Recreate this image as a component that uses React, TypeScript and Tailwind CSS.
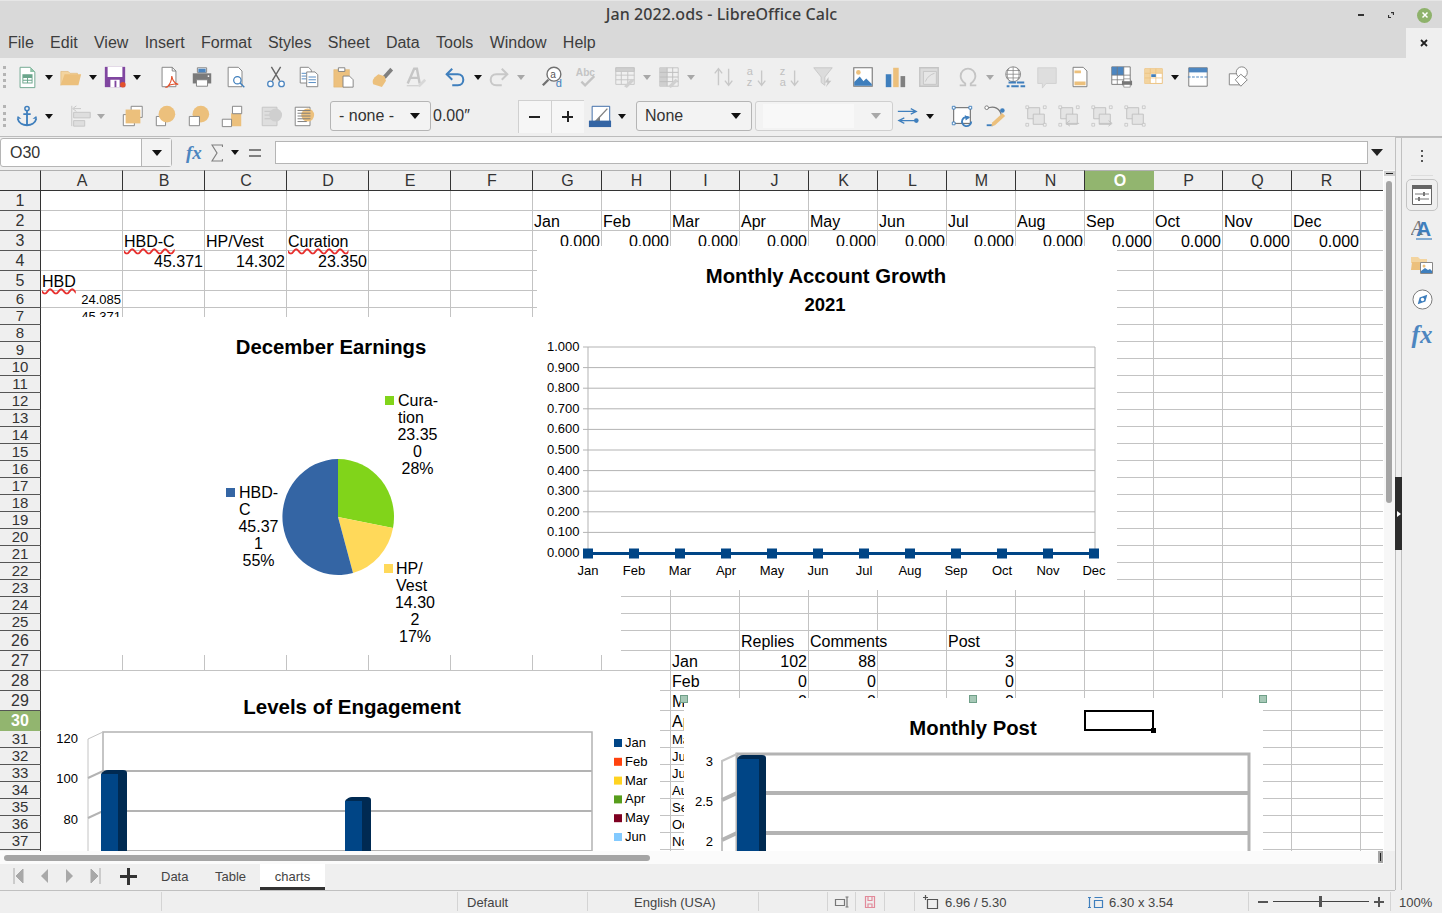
import React from "react";

const sans = "font-['Liberation_Sans',Arial,sans-serif]";

const ic: Record<string, React.ReactNode> = {
  new: <><path d="M4.5 1.5h11l5 5v17h-16z" fill="#fff" stroke="#6aa58b" /><path d="M15.5 1.5l5 5h-5z" fill="#8fc3a8" /><path d="M7 9h11v10H7z" fill="#6aa58b" /><path d="M8 13h4v2H8zM13 13h4v2h-4zM8 16h4v2H8zM13 16h4v2h-4z" fill="#fff" /></>,
  open: <><path d="M1 21V6h8l2 2h8v3H6z" fill="#f3d49f" stroke="#e0b878" strokeWidth=".7" /><path d="M1 21l4-12h18l-3 12z" fill="#ecc07c" /></>,
  save: <><path d="M1 1h22v22H1z" fill="#8046a0" /><path d="M4 1h16v11H4z" fill="#fff" /><path d="M7 15h10v8H7z" fill="#fff" /><path d="M11.500 16h2v7h-2z" fill="#8046a0" /><circle cx="20.5" cy="20.500" r="3" fill="#e2512d" /></>,
  pdf: <><path d="M4.5 1.5h11l4 4v17h-15z" fill="#fff" stroke="#808080" /><path d="M15.5 1.5v4h4" fill="none" stroke="#808080" /><path d="M10 23c3-3 5-8 5-12 1 5 3 8 7 9-5-1-9 0-13 3z" fill="none" stroke="#e2512d" strokeWidth="1.2" /></>,
  print: <><path d="M7 2h10v5H7z" fill="#fff" stroke="#808080" /><path d="M8 3h8v4H8z" fill="#4d86c0" /><path d="M2 8h20v11H2z" fill="#7a7a7a" /><path d="M6 15h12v7H6z" fill="#fff" stroke="#808080" /><circle cx="19" cy="11" r="1" fill="#fff" /></>,
  preview: <><path d="M3.5 1.5h11l4 4v17h-15z" fill="#fff" stroke="#808080" /><circle cx="13.5" cy="15.5" r="4" fill="#fff" stroke="#3f7fbd" strokeWidth="1.3" /><path d="M16.5 18.5l4.5 4.5" stroke="#3f7fbd" strokeWidth="1.5" /></>,
  cut: <><path d="M7 1l9 15M17 1L8 16" stroke="#666" strokeWidth="1.5" /><circle cx="6" cy="19.5" r="3" fill="#fff" stroke="#4d86c0" strokeWidth="1.4" /><circle cx="18" cy="19.5" r="3" fill="#fff" stroke="#4d86c0" strokeWidth="1.4" /></>,
  copy: <><path d="M2.5 1.5h9l3 3v14h-12z" fill="#fff" stroke="#808080" /><path d="M9.5 6.5h9l3 3v13h-12z" fill="#fff" stroke="#808080" /><path d="M4 8h5M4 11h5M4 14h5M11.5 12h8M11.5 15h8M11.5 18h8" stroke="#4d86c0" /></>,
  paste: <><path d="M2 4h17v19H2z" fill="#edc17e" stroke="#dcb06c" strokeWidth=".5" /><path d="M7 2h7v4H7z" fill="#fff" stroke="#808080" /><path d="M12 11h7l4 4v8H12z" fill="#fff" stroke="#808080" /></>,
  clone: <><path d="M21 2l-8 9 3 3 8-9z" fill="#808080" /><path d="M6 10l7 0 3 4-2 8H4c-2-3-3-5 2-12z" fill="#ecc07c" transform="rotate(18 10 16)" /></>,
  clear: <><path d="M3 19L10 3h3l3 16M6 13h9" fill="none" stroke="#c6c6c6" strokeWidth="2.6" /><path d="M2 21.5h14" stroke="#c6c6c6" /><path d="M14 21l7-7 2 2-7 7z" fill="#d8d8d8" /></>,
  undo: <><path d="M3 9h12c4 0 6 3 6 6s-2 6-6 6H9" fill="none" stroke="#3f7fbd" strokeWidth="2.2" /><path d="M9 3L3 9l6 6" fill="none" stroke="#3f7fbd" strokeWidth="2.2" /></>,
  redo: <><path d="M21 9H9c-4 0-6 3-6 6s2 6 6 6h6" fill="none" stroke="#c8c8c8" strokeWidth="2.2" /><path d="M15 3l6 6-6 6" fill="none" stroke="#c8c8c8" strokeWidth="2.2" /></>,
  find: <><circle cx="13" cy="9" r="7.5" fill="#fff" stroke="#707070" strokeWidth="1.5" /><path d="M7 15l-6 6" stroke="#707070" strokeWidth="2.5" /><text x="9" y="13" fontSize="11" fill="#555" fontFamily="Liberation Sans">a</text><text x="15" y="23" fontSize="12" fill="#3f7fbd" fontFamily="Liberation Sans">d</text></>,
  spell: <><text x="1" y="11" fontSize="11" fontWeight="700" fill="#c4c4c4" fontFamily="Liberation Sans">Abc</text><path d="M7 17l4 4 10-10" fill="none" stroke="#c4c4c4" strokeWidth="2.5" /></>,
  rows: <><path d="M2 2h20v18H2z" fill="#f0f0f0" stroke="#c4c4c4" /><path d="M2 2h20v4H2zM2 10h20M2 15h20M8 6v14M15 6v14" fill="#cfcfcf" stroke="#c4c4c4" /><path d="M11 22l8-8 3 2-8 8z" fill="#d0d0d0" /></>,
  cols: <><path d="M2 2h20v20H2z" fill="#f0f0f0" stroke="#c4c4c4" /><path d="M2 2h8v20H2z" fill="#cfcfcf" /><path d="M2 7h20M2 12h20M2 17h20M10 2v20M16 2v20" stroke="#bdbdbd" /><path d="M11 22l8-8 3 2-8 8z" fill="#d0d0d0" /></>,
  sort: <path d="M6 21V3M2 8l4-5 4 5M17 3v18M13 16l4 5 4-5" fill="none" stroke="#c8c8c8" strokeWidth="1.5" />,
  sa: <><text x="1" y="10" fontSize="12" fill="#c0c0c0" fontFamily="Liberation Sans">a</text><text x="1" y="22" fontSize="12" fill="#c0c0c0" fontFamily="Liberation Sans">z</text><path d="M17 5v16M13 16l4 5 4-5" fill="none" stroke="#c8c8c8" strokeWidth="1.5" /></>,
  sd: <><text x="1" y="10" fontSize="12" fill="#c0c0c0" fontFamily="Liberation Sans">z</text><text x="1" y="22" fontSize="12" fill="#c0c0c0" fontFamily="Liberation Sans">a</text><path d="M17 5v16M13 16l4 5 4-5" fill="none" stroke="#c8c8c8" strokeWidth="1.5" /></>,
  filter: <><path d="M2 2h20l-8 10v9l-4-3v-6z" fill="#dcdcdc" stroke="#c8c8c8" /><path d="M18 12l-4 6h3l-2 5 6-7h-3z" fill="#c4c4c4" /></>,
  image: <><path d="M2 2h20v20H2z" fill="#fff" stroke="#777" strokeWidth="1.2" /><circle cx="7" cy="7" r="2.5" fill="#ecc07c" /><path d="M2.5 21.5v-4l6-6 4 5 3-3 6 6v2z" fill="#3f7fbd" /></>,
  chart: <><path d="M2 9h6v14H2z" fill="#3f7fbd" /><path d="M10 2h6v21h-6z" fill="#ecc07c" /><path d="M18 11h5v12h-5z" fill="#808080" /></>,
  pivot: <><path d="M2 2h20v20H2z" fill="#dcdcdc" stroke="#c4c4c4" strokeWidth="1.5" /><path d="M6 6h14v14H6z" fill="#e6e6e6" stroke="#c4c4c4" /><path d="M8 17c2-5 6-8 10-9" fill="none" stroke="#c4c4c4" /></>,
  omega: <path d="M3 21h6v-2c-3-2-5-5-5-8 0-5 4-8 8-8s8 3 8 8c0 3-2 6-5 8v2h6" fill="none" stroke="#c4c4c4" strokeWidth="2" />,
  link: <><circle cx="10" cy="9" r="8" fill="#fff" stroke="#808080" /><path d="M2 9h16M10 1v16M5 3c-2 4-2 8 0 12M15 3c2 4 2 8 0 12M3 5h14M3 13h14" stroke="#808080" strokeWidth=".8" fill="none" /><path d="M5 18h8M14 18h8M8 22h8M18 22h5M3 22h3" stroke="#3f7fbd" strokeWidth="2" /></>,
  comment: <path d="M2 2h20v17H11l-4 5v-5H2z" fill="#dedede" stroke="#d0d0d0" />,
  header: <><path d="M4.5 1.5h11l4 4v17h-15z" fill="#fff" stroke="#777" /><path d="M6 5h7v3H6zM6 17h12v4H6z" fill="#ecc07c" /></>,
  parea: <><path d="M2 1h20v19H2z" fill="#fff" stroke="#777" /><path d="M2 1h13v9H2z" fill="#4d86c0" /><path d="M2 10h20M2 15h20M8 1v19M15 1v19" stroke="#777" strokeWidth=".8" /><path d="M13 16h11v5H13z" fill="#777" /><path d="M15 14h7v3h-7z M15 20h7v3h-7z" fill="#fff" stroke="#777" strokeWidth=".7" /></>,
  form: <><path d="M2 3h19v16H2z" fill="#fff" stroke="#ecc07c" /><path d="M2 3h19v5H2zM2 8h6v11H2z" fill="#f3d49f" /><path d="M2 8h19M2 13h19M8 3v16M14 3v16" stroke="#ecc07c" strokeWidth=".8" /><path d="M9 9h5v3H9z" fill="#3f7fbd" /></>,
  freeze: <><path d="M2 2h20v20H2z" fill="#fff" stroke="#777" /><path d="M2 2h20v5H2z" fill="#4d86c0" /><path d="M1 12h22" stroke="#4d86c0" strokeDasharray="3 1.5" strokeWidth="1.3" /></>,
  shapes: <><path d="M1.5 8.5h12v12h-12z" fill="#fff" stroke="#808080" /><circle cx="15" cy="7" r="6" fill="#fff" stroke="#808080" /><path d="M14 9l7 6-7 7-6-7z" fill="#fff" stroke="#808080" /></>,
  anchor: <><circle cx="12" cy="4" r="2.3" fill="none" stroke="#3f7fbd" strokeWidth="1.6" /><path d="M12 6v16M8 10h8M2 15c1 5 6 7 10 7s9-2 10-7" fill="none" stroke="#3f7fbd" strokeWidth="2" /><path d="M1 15h5L2 12zM23 15h-5l4-3z" fill="#3f7fbd" /></>,
  align: <><path d="M2 1v22" stroke="#c4c4c4" /><path d="M4 8h18v6H4zM4 17h12v6H4z" fill="#dedede" stroke="#c4c4c4" /><path d="M12 4H4M7 1L3 4l4 3" fill="none" stroke="#c4c4c4" /></>,
  front: <><path d="M10 1.500h12v12H10z" fill="#fff" stroke="#808080" /><path d="M1.500 10.500h12v12h-12z" fill="#fff" stroke="#808080" /><path d="M4 5h16v15H4z" fill="#ecc07c" /></>,
  fwd: <><path d="M1.500 12.500h10v10h-10z" fill="#fff" stroke="#808080" /><circle cx="13" cy="10" r="9" fill="#ecc07c" /></>,
  back: <><circle cx="14" cy="10" r="9" fill="#ecc07c" /><path d="M1.500 12.500h11v10h-11z" fill="#fff" stroke="#808080" /></>,
  rear: <><path d="M11 9h11v14H6v-6h5z" fill="#ecc07c" /><path d="M12.500 1.500h10v8h-10z" fill="#fff" stroke="#808080" /><path d="M1.500 15.500h10v8h-10z" fill="#fff" stroke="#808080" /></>,
  infront: <><path d="M2.500 2.500h16v20h-16z" fill="#dedede" stroke="#c4c4c4" /><path d="M5 7h11M5 11h11M5 15h11" stroke="#c4c4c4" /><circle cx="17" cy="11" r="7" fill="#cfcfcf" /></>,
  behind: <><path d="M2.500 2.500h16v20h-16z" fill="#fff" stroke="#808080" /><circle cx="16" cy="11" r="7" fill="#ecc07c" /><path d="M5 6h14M5 9h14M5 12h14M5 15h14M5 18h10" stroke="#777" /></>,
  linecolor: <><path d="M3.500 1.500h19v20h-19z" fill="#fff" stroke="#3465a4" /><path d="M6 19L20 4" stroke="#808080" strokeWidth="1.5" /><path d="M6 19l6-6v6z" fill="#808080" /><path d="M0 17h24v7H0z" fill="#3465a4" /></>,
  arrows: <><path d="M1 7h19M15 4l6 3-6 3" fill="none" stroke="#3f7fbd" strokeWidth="1.3" /><path d="M4 17h18M8 14l-6 3 6 3" fill="none" stroke="#3f7fbd" strokeWidth="1.3" /><circle cx="21" cy="17" r="2.500" fill="#3f7fbd" /></>,
  rotate: <><path d="M3 3h18v17H3z" fill="#fff" stroke="#555" /><path d="M1.500 1.500h3v3h-3zM19.500 1.500h3v3h-3zM1.500 18.500h3v3h-3z" fill="#fff" stroke="#3f7fbd" /><path d="M22 18a5 5 0 1 1-2-4" fill="none" stroke="#3f7fbd" strokeWidth="2" /><path d="M15 11l5 3-4 3z" fill="#3f7fbd" /></>,
  points: <><path d="M3 4c8-4 15 0 16 8" fill="none" stroke="#777" strokeWidth="1.3" /><circle cx="3" cy="3" r="2" fill="#fff" stroke="#777" /><circle cx="20" cy="6" r="2.500" fill="#3f7fbd" /><path d="M3 22h7" stroke="#3f7fbd" strokeWidth="2" /><path d="M8 23l1-4 11-10 3 3-11 10z" fill="#ecc07c" /></>,
  g1: <><path d="M3 3h13v12H3z" fill="#e4e4e4" stroke="#c0c0c0" /><path d="M9 10h12v11H9z" fill="#e4e4e4" stroke="#c0c0c0" /><path d="M1 1h3v3H1zM20 1h3v3h-3zM1 20h3v3H1zM20 20h3v3h-3z" fill="#f0f0f0" stroke="#c0c0c0" strokeWidth=".8" /></>,
  g2: <><path d="M3 3h13v12H3z" fill="#e4e4e4" stroke="#c0c0c0" /><path d="M9 10h12v11H9z" fill="#e4e4e4" stroke="#c0c0c0" /><path d="M1 1h3v3H1zM20 1h3v3h-3zM1 20h3v3H1z" fill="#f0f0f0" stroke="#c0c0c0" strokeWidth=".8" /><path d="M23 20H10M13 17l-4 3 4 3" fill="none" stroke="#c0c0c0" /></>,
  g3: <><path d="M3 3h13v12H3z" fill="#e4e4e4" stroke="#c0c0c0" /><path d="M9 10h12v11H9z" fill="#e4e4e4" stroke="#c0c0c0" /><path d="M1 1h3v3H1zM20 1h3v3h-3zM1 20h3v3H1z" fill="#f0f0f0" stroke="#c0c0c0" strokeWidth=".8" /><path d="M9 20h13M19 17l4 3-4 3" fill="none" stroke="#c0c0c0" /></>,
};

function Tb({ items }: { items: [string, string][] }) {
  return (
    <>
      {items.map(([n, c], i) =>
        n === "d" || n === "g" ? (
          <svg key={i} viewBox="0 0 8 5" className={`w-2 h-[5px] shrink-0 ${c}`}>
            <path d="M0 0h8L4 5z" fill={n === "d" ? "#111" : "#a8a8a8"} />
          </svg>
        ) : (
          <svg key={i} viewBox="-1 -1 26 26" className={`w-6 h-6 shrink-0 ${c}`}>{ic[n]}</svg>
        )
      )}
    </>
  );
}

const Handle = () => <div className="w-[3px] h-[22px] shrink-0 ml-[3px] border-l-[3px] border-dotted border-[#b4b4b4]" />;

const row1: [string, string][] = [
  ["new", "ml-[9px]"], ["d", "ml-[6px]"], ["open", "ml-[6px]"], ["d", "ml-[6px]"], ["save", "ml-[6px]"], ["d", "ml-[6px]"],
  ["pdf", "ml-[16px]"], ["print", "ml-[9px]"], ["preview", "ml-[10px]"], ["cut", "ml-[16px]"], ["copy", "ml-[9px]"], ["paste", "ml-[10px]"],
  ["clone", "ml-[15px]"], ["clear", "ml-[10px]"], ["undo", "ml-[15px]"], ["d", "ml-[7px]"], ["redo", "ml-[5px]"], ["g", "ml-[6px]"],
  ["find", "ml-[16px]"], ["spell", "ml-[9px]"], ["rows", "ml-[15px]"], ["g", "ml-[6px]"], ["cols", "ml-[6px]"], ["g", "ml-[6px]"],
  ["sort", "ml-[17px]"], ["sa", "ml-[9px]"], ["sd", "ml-[9px]"], ["filter", "ml-[9px]"], ["image", "ml-[16px]"], ["chart", "ml-[8px]"],
  ["pivot", "ml-[10px]"], ["omega", "ml-[15px]"], ["g", "ml-[6px]"], ["link", "ml-[9px]"], ["comment", "ml-[8px]"], ["header", "ml-[9px]"],
  ["parea", "ml-[17px]"], ["form", "ml-[9px]"], ["d", "ml-[5px]"], ["freeze", "ml-[7px]"], ["shapes", "ml-[17px]"],
];

const cols = ["A", "B", "C", "D", "E", "F", "G", "H", "I", "J", "K", "L", "M", "N", "O", "P", "Q", "R"];
const months = ["Jan", "Feb", "Mar", "Apr", "May", "Jun", "Jul", "Aug", "Sep", "Oct", "Nov", "Dec"];

type C = { t: string; r?: boolean; w?: boolean };
const data: Record<string, C> = {
  B3: { t: "HBD-C", w: true }, C3: { t: "HP/Vest" }, D3: { t: "Curation", w: true },
  B4: { t: "45.371", r: true }, C4: { t: "14.302", r: true }, D4: { t: "23.350", r: true },
  A5: { t: "HBD", w: true }, A6: { t: "24.085", r: true }, A7: { t: "45.371", r: true },
  J26: { t: "Replies" }, K26: { t: "Comments" }, M26: { t: "Post" },
  I27: { t: "Jan" }, J27: { t: "102", r: true }, K27: { t: "88", r: true }, M27: { t: "3", r: true },
  I28: { t: "Feb" }, J28: { t: "0", r: true }, K28: { t: "0", r: true }, M28: { t: "0", r: true },
  I29: { t: "Mar" }, J29: { t: "0", r: true }, K29: { t: "0", r: true }, M29: { t: "0", r: true },
  I30: { t: "Apr" },
};
months.forEach((m, i) => {
  data[cols[6 + i] + "2"] = { t: m };
  data[cols[6 + i] + "3"] = { t: "0.000", r: true };
});
["May", "Jun", "Jul", "Aug", "Sep", "Oct", "Nov"].forEach((m, i) => {
  data["I" + (31 + i)] = { t: m };
});

const rowNums = Array.from({ length: 38 }, (_, i) => i + 1);

function Sheet() {
  return (
    <div className="grid grid-cols-[41px_repeat(6,82px)_repeat(12,69px)_22px] grid-rows-[21px_repeat(5,20px)_repeat(20,17px)_repeat(5,20px)_repeat(7,17px)] w-[1384px]">
      <div className="bg-[#efefef] border-t border-[#b0b0b0] border-r border-b border-r-[#333] border-b-[#333]" />
      {cols.map((c) => (
        <div key={c} className={c === "O"
          ? "bg-[#92b56f] text-white font-bold border-t border-[#b0b0b0] border-b border-b-[#333] flex items-center justify-center pl-[1px] text-[16px] leading-none"
          : "bg-[#efefef] text-[#333] border-t border-[#b0b0b0] border-r border-b border-r-[#333] border-b-[#333] flex items-center justify-center pl-[1px] text-[16px] leading-none"}>{c}</div>
      ))}
      <div className="bg-[#efefef] border-t border-[#b0b0b0] border-b border-b-[#333]" />
      {rowNums.map((r) => {
        const small = (r >= 6 && r <= 25) || r >= 31;
        return (
          <React.Fragment key={r}>
            <div className={r === 30
              ? "bg-[#92b56f] text-white font-bold border-r border-b border-r-[#333] border-b-[#92b56f] flex items-center justify-center text-[16px] leading-none overflow-hidden"
              : small
                ? "bg-[#efefef] text-[#333] border-r border-b border-r-[#333] border-b-[#555] flex items-center justify-center pb-[1px] text-[15px] leading-none overflow-hidden"
                : "bg-[#efefef] text-[#333] border-r border-b border-r-[#333] border-b-[#555] flex items-center justify-center text-[16px] leading-none overflow-hidden"}>{r}</div>
            {cols.map((c) => {
              const d = data[c + r];
              const nb = c === "K" && r === 26;
              return (
                <div key={c} className={(nb ? "border-b border-[#c3c3c3] " : "border-r border-b border-[#c3c3c3] ") + (d?.r ? "flex items-center justify-end pr-[1px] " : "flex items-center pl-[1px] ") + "whitespace-nowrap text-black min-w-0 " + (small ? "text-[13px]" : "text-[16px] pt-[2px]")}>
                  {d && (d.w ? <span className="underline decoration-wavy decoration-[#e8302e] decoration-[1.5px] underline-offset-[1px] leading-none">{d.t}</span> : <span className="leading-none">{d.t}</span>)}
                </div>
              );
            })}
            <div className="border-b border-[#c3c3c3]" />
          </React.Fragment>
        );
      })}
    </div>
  );
}

const tx = { fontFamily: "Liberation Sans", fill: "#000" };

function DecChart() {
  const L = (x: number, y: number, t: string, a: "start" | "middle" = "middle") => (
    <text x={x} y={y} fontSize="16" textAnchor={a} {...tx}>{t}</text>
  );
  return (
    <svg viewBox="41 317 580 338" className="w-full h-full">
      <text x="331" y="354" fontSize="20.3" fontWeight="700" textAnchor="middle" {...tx}>December Earnings</text>
      <path d="M338 517V459A56 58 0 0 1 393 528Z" fill="#81d41a" />
      <path d="M338 517L393 528A56 58 0 0 1 353 573Z" fill="#ffd95a" />
      <path d="M338 517L353 573A56 58 0 1 1 338 459Z" fill="#3465a4" />
      <rect x="385" y="396" width="9" height="9" fill="#81d41a" />
      {L(398, 406, "Cura-", "start")}{L(398, 423, "tion", "start")}{L(417.500, 440, "23.35")}{L(417.500, 457, "0")}{L(417.500, 474, "28%")}
      <rect x="226" y="488" width="9" height="9" fill="#3465a4" />
      {L(239, 498, "HBD-", "start")}{L(239, 515, "C", "start")}{L(258.500, 532, "45.37")}{L(258.500, 549, "1")}{L(258.500, 566, "55%")}
      <rect x="384" y="564" width="9" height="9" fill="#ffd95a" />
      {L(396, 574, "HP/", "start")}{L(396, 591, "Vest", "start")}{L(415, 608, "14.30")}{L(415, 625, "2")}{L(415, 642, "17%")}
    </svg>
  );
}

function GrowthChart() {
  const ys = Array.from({ length: 11 }, (_, i) => 347 + i * 20.6);
  const xs = months.map((_, i) => 588 + i * 46);
  return (
    <svg viewBox="537 246 580 344" className="w-full h-full">
      <text x="826" y="283" fontSize="20.3" fontWeight="700" textAnchor="middle" {...tx}>Monthly Account Growth</text>
      <text x="825" y="311" fontSize="18.5" fontWeight="700" textAnchor="middle" {...tx}>2021</text>
      {ys.map((y, i) => (
        <g key={i}>
          <path d={`M583 ${y}H1095`} stroke="#b3b3b3" strokeWidth="1" />
          <text x="579.500" y={y + 4} fontSize="13" textAnchor="end" {...tx}>{(1 - i / 10).toFixed(3)}</text>
        </g>
      ))}
      <path d="M588 347V558M1095 347V553" stroke="#b3b3b3" />
      {xs.map((x, i) => (
        <g key={i}>
          <path d={`M${x} 553v5`} stroke="#b3b3b3" />
          <rect x={x - 5} y={548.500} width="10" height="10" fill="#004586" />
          <text x={x} y="575" fontSize="13" textAnchor="middle" {...tx}>{months[i]}</text>
        </g>
      ))}
      <path d="M588 553.500H1094" stroke="#004586" strokeWidth="3" />
    </svg>
  );
}

function Bar3D({ x, top, h }: { x: number; top: number; h: number }) {
  return (
    <g>
      <path d={`M${x} ${top + 4}q3 -4 7 -4h15q4 0 4 3v${h}h-26z`} fill="#002a52" />
      <path d={`M${x} ${top + 4}h17v${h}h-17z`} fill="#004586" />
    </g>
  );
}

function LevelsChart() {
  const leg: [string, string][] = [["Jan", "#004586"], ["Feb", "#ff420e"], ["Mar", "#ffd320"], ["Apr", "#579d1c"], ["May", "#7e0021"], ["Jun", "#83caff"], ["Jul", "#314004"]];
  return (
    <svg viewBox="41 671 619 180" className="w-full h-full">
      <text x="352" y="714" fontSize="20.500" fontWeight="700" textAnchor="middle" {...tx}>Levels of Engagement</text>
      <path d="M103 851V732H592V851" fill="#fff" stroke="#b3b3b3" strokeWidth="1.5" />
      <path d="M88 851V739L103 732" fill="none" stroke="#c4c4c4" strokeWidth="1" />
      <path d="M88 778L103 771H592M88 818L103 811H592" fill="none" stroke="#b3b3b3" strokeWidth="2" />
      <path d="M103 851H592" stroke="#b3b3b3" strokeWidth="2" />
      <Bar3D x={101} top={770} h={90} />
      <Bar3D x={345} top={797} h={60} />
      <text x="78" y="743" fontSize="13" textAnchor="end" {...tx}>120</text>
      <text x="78" y="783" fontSize="13" textAnchor="end" {...tx}>100</text>
      <text x="78" y="824" fontSize="13" textAnchor="end" {...tx}>80</text>
      {leg.map(([t, c], i) => (
        <g key={t}>
          <rect x="614" y={739 + i * 18.8} width="8" height="8" fill={c} />
          <text x="625" y={747 + i * 18.8} fontSize="13" {...tx}>{t}</text>
        </g>
      ))}
    </svg>
  );
}

function PostChart() {
  return (
    <svg viewBox="684 698 579 153" className="w-full h-full">
      <text x="973" y="735" fontSize="20.3" fontWeight="700" textAnchor="middle" {...tx}>Monthly Post</text>
      <path d="M737 851V754H1249V851" fill="#fff" stroke="#b3b3b3" strokeWidth="3" />
      <path d="M722 851V761L737 754" fill="none" stroke="#c4c4c4" strokeWidth="2" />
      <path d="M722 800L737 793H1249M722 840L737 833H1249" fill="none" stroke="#b3b3b3" strokeWidth="4" />
      <path d="M737 759q2 -4 6 -4h19q4 0 4 3v100h-29z" fill="#002a52" />
      <path d="M737 759h22v100h-22z" fill="#004586" />
      <text x="713" y="766" fontSize="13" textAnchor="end" {...tx}>3</text>
      <text x="713" y="806" fontSize="13" textAnchor="end" {...tx}>2.5</text>
      <text x="713" y="846" fontSize="13" textAnchor="end" {...tx}>2</text>
    </svg>
  );
}

const HandleDot = ({ c }: { c: string }) => <div className={`absolute top-[525px] w-2 h-2 bg-[#a6c8b6] border border-[#6f9f88] ${c}`} />;

const Sel = ({ children, c }: { children: React.ReactNode; c: string }) => (
  <div className={`h-[30px] rounded-[3px] border border-[#b5b5b5] flex items-center justify-between shrink-0 ${c}`}>{children}</div>
);

const Tri = ({ c = "#111" }: { c?: string }) => (
  <svg viewBox="0 0 10 6" className="w-[10px] h-[6px] shrink-0"><path d="M0 0h10L5 6z" fill={c} /></svg>
);

const SI = ({ d, c = "#777" }: { d: string; c?: string }) => (
  <svg viewBox="0 0 16 16" className="w-4 h-4 shrink-0"><path d={d} fill="none" stroke={c} strokeWidth="1.2" /></svg>
);

export default function App() {
  return (
    <div className={`w-[1442px] h-[913px] flex flex-col overflow-hidden bg-[#efefef] ${sans}`}>
      {/* Title bar */}
      <div className="h-[28px] shrink-0 bg-[#d9d9d9] border-t border-[#e6e6e6] flex items-center justify-center relative">
        <span className="font-['Noto_Sans',sans-serif] font-medium text-[16px] tracking-[0.07px] text-[#3d3d3d] mb-[2px] ml-[1px]">Jan 2022.ods - LibreOffice Calc</span>
        <div className="absolute right-[10px] top-[3px] flex items-center h-[22px]">
          <div className="w-[6px] h-[2px] bg-[#333] mr-[24px]" />
          <svg viewBox="0 0 8 8" className="w-[6px] h-[6px] mr-[23px]"><path d="M0 8V4h1.500v2.500H4V8zM8 0v4H6.500V1.500H4V0z" fill="#333" /></svg>
          <div className="w-[15px] h-[15px] rounded-full bg-[#8eb26b] flex items-center justify-center">
            <svg viewBox="0 0 8 8" className="w-2 h-2"><path d="M1.500 1.500l5 5M6.500 1.500l-5 5" stroke="#fff" strokeWidth="1.500" /></svg>
          </div>
        </div>
      </div>
      {/* Menu */}
      <div className="h-[30px] shrink-0 flex">
        <div className="flex-1 bg-[#d9d9d9] flex items-center pl-[8px] gap-[16.300px] text-[16px] text-[#3d3d3d]">
          {["File", "Edit", "View", "Insert", "Format", "Styles", "Sheet", "Data", "Tools", "Window", "Help"].map((m) => (
            <span key={m}>{m}</span>
          ))}
        </div>
        <div className="w-[36px] bg-[#efefef] flex items-center justify-center">
          <svg viewBox="0 0 8 8" className="w-2 h-2"><path d="M1 1l6 6M7 1L1 7" stroke="#222" strokeWidth="1.800" /></svg>
        </div>
      </div>
      {/* Toolbars */}
      <div className="h-[38px] shrink-0 flex items-center"><Handle /><Tb items={row1} /></div>
      <div className="h-[41px] shrink-0 flex items-center border-b border-[#bcbcbc]">
        <Handle />
        <Tb items={[["anchor", "ml-[9px]"], ["d", "ml-[6px]"], ["align", "ml-[16px]"], ["g", "ml-[4px]"], ["front", "ml-[16px]"], ["fwd", "ml-[9px]"], ["back", "ml-[9px]"], ["rear", "ml-[9px]"], ["infront", "ml-[15px]"], ["behind", "ml-[9px]"]]} />
        <Sel c="ml-[14px] w-[101px] pl-[8px] pr-[10px] text-[16px] text-[#333] bg-[#f3f3f3]"><span>- none -</span><Tri /></Sel>
        <span className="ml-[2px] w-[85px] text-[16px] text-[#333] shrink-0">0.00″</span>
        <div className="w-[66px] h-[33px] shrink-0 flex bg-[#f6f6f6] border-l border-t border-[#d0d0d0]">
          <div className="w-[33px] border-r border-[#d0d0d0] flex items-center justify-center">
            <div className="w-[11px] h-[2px] bg-[#222]" />
          </div>
          <div className="w-[33px] flex items-center justify-center relative">
            <div className="w-[11px] h-[2px] bg-[#222]" />
            <div className="absolute w-[2px] h-[11px] bg-[#222]" />
          </div>
        </div>
        <Tb items={[["linecolor", "ml-[4px]"], ["d", "ml-[6px]"]]} />
        <Sel c="ml-[10px] w-[116px] pl-[8px] pr-[10px] text-[16px] text-[#333] bg-[#f3f3f3]"><span>None</span><Tri /></Sel>
        <Sel c="ml-[3px] w-[138px] pl-[7px] pr-[11px] border-[#cfcfcf] bg-[#f3f3f3]"><div className="w-[91px] h-[24px] bg-[#f8f8f8]" /><Tri c="#a8a8a8" /></Sel>
        <Tb items={[["arrows", "ml-[3px]"], ["d", "ml-[6px]"], ["rotate", "ml-[16px]"], ["points", "ml-[9px]"], ["g1", "ml-[17px]"], ["g2", "ml-[9px]"], ["g3", "ml-[9px]"], ["g1", "ml-[9px]"]]} />
      </div>
      {/* Body */}
      <div className="flex-1 flex min-h-0">
        <div className="w-[1395px] flex flex-col shrink-0">
          {/* Formula bar */}
          <div className="h-[33px] shrink-0 flex items-center pb-[2px]">
            <div className="ml-[0px] w-[172px] h-[29px] flex bg-white border border-[#b5b5b5] rounded-[3px] shrink-0">
              <div className="w-[141px] pl-[9px] flex items-center text-[16px] text-[#333] border-r border-[#b5b5b5]">O30</div>
              <div className="flex-1 bg-[#f3f3f3] flex items-center justify-center"><Tri /></div>
            </div>
            <span className="ml-[14px] w-[19px] font-['Liberation_Serif',serif] italic font-bold text-[19px] text-[#4d86c0] leading-none shrink-0">fx</span>
            <svg viewBox="0 0 12 18" className="ml-[6px] w-[12px] h-[18px] shrink-0"><path d="M11.500 3V1H1l5 8-5 8h10.500v-2" fill="none" stroke="#808080" strokeWidth="1.200" /></svg>
            <svg viewBox="0 0 8 5" className="ml-[8px] w-[8px] h-[5px] shrink-0"><path d="M0 0h8L4 5z" fill="#111" /></svg>
            <div className="ml-[10px] w-[12px] h-[8px] border-y-2 border-[#808080] shrink-0" />
            <div className="ml-[14px] w-[1093px] h-[23px] bg-white border border-[#b5b5b5] shrink-0" />
            <div className="ml-[3px] shrink-0"><svg viewBox="0 0 12 7" className="w-3 h-[7px]"><path d="M0 0h12L6 7z" fill="#222" /></svg></div>
          </div>
          {/* Sheet */}
          <div className="h-[681px] shrink-0 flex">
            <div className="w-[1384px] h-full relative overflow-hidden bg-white shrink-0">
              <Sheet />
              <div className="absolute left-[41px] top-[147px] w-[580px] h-[338px] bg-white"><DecChart /></div>
              <div className="absolute left-[537px] top-[76px] w-[580px] h-[344px] bg-white"><GrowthChart /></div>
              <div className="absolute left-[41px] top-[501px] w-[619px] h-[180px] bg-white"><LevelsChart /></div>
              <div className="absolute left-[684px] top-[528px] w-[579px] h-[153px] bg-white"><PostChart /></div>
              <HandleDot c="left-[680px]" />
              <HandleDot c="left-[969px]" />
              <HandleDot c="left-[1259px]" />
              <div className="absolute left-[1084px] top-[540px] w-[70px] h-[21px] border-2 border-black" />
              <div className="absolute left-[1151px] top-[558px] w-[5px] h-[5px] bg-black" />
            </div>
            <div className="w-[11px] h-full bg-[#f7f7f7] relative shrink-0">
              <div className="absolute left-0 top-[1px] w-[11px] h-[5px] bg-[#cfcfcf] flex items-center justify-center"><div className="w-[7px] h-[1px] bg-[#222]" /></div>
              <div className="absolute left-[2px] top-[11px] w-[6px] h-[322px] rounded-[3px] bg-[#a5a5a5]" />
            </div>
          </div>
          {/* H scroll */}
          <div className="h-[13px] shrink-0 flex items-center">
            <div className="w-[1384px] h-full bg-[#fbfbfb] flex items-center relative shrink-0">
              <div className="ml-[4px] w-[646px] h-[6px] rounded-[3px] bg-[#a5a5a5]" />
              <div className="absolute left-[1378px] top-0 w-[5px] h-[12px] bg-[#a5a5a5] flex items-center justify-center"><div className="w-[1px] h-[8px] bg-[#222]" /></div>
            </div>
          </div>
          {/* Tabs */}
          <div className="flex-1 flex items-stretch text-[13px] text-[#444] border-b border-[#c0c0c0]">
            <svg viewBox="0 0 90 16" className="ml-[13px] mt-[4px] w-[90px] h-[16px] shrink-0">
              <path d="M1 0v16M10 1L3 8l7 7z" fill="#a8a8a8" stroke="#a8a8a8" />
              <path d="M35 1l-7 7 7 7z" fill="#a8a8a8" />
              <path d="M53 1l7 7-7 7z" fill="#a8a8a8" />
              <path d="M78 1l7 7-7 7zM87 0v16" fill="#a8a8a8" stroke="#a8a8a8" />
            </svg>
            <div className="ml-[16px] w-[18px] flex items-center justify-center relative shrink-0">
              <div className="w-[17px] h-[3px] bg-[#333]" />
              <div className="absolute w-[3px] h-[17px] bg-[#333]" />
            </div>
            <div className="ml-[24px] w-[54px] pt-[3px] shrink-0">Data</div>
            <div className="w-[45px] pt-[3px] shrink-0">Table</div>
            <div className="w-[65px] pt-[3px] bg-white border-b-[3px] border-[#333] text-center shrink-0">charts</div>
          </div>
        </div>
        {/* Sidebar */}
        <div className="flex-1 relative border-l border-[#c0c0c0] border-t border-t-[#c0c0c0] flex">
          <div className="w-[6px] h-full border-r border-[#c0c0c0] shrink-0" />
          <div className="absolute left-[-1px] top-[339px] w-[7px] h-[73px] bg-[#2d2d2d] flex items-center justify-center">
            <svg viewBox="0 0 4 6" className="w-1 h-[6px]"><path d="M0 0l4 3-4 3z" fill="#fff" /></svg>
          </div>
          <div className="flex-1 flex flex-col items-center">
            <div className="mt-[12px] flex flex-col gap-[3px]">
              <div className="w-[2px] h-[2px] bg-[#555]" /><div className="w-[2px] h-[2px] bg-[#555]" /><div className="w-[2px] h-[2px] bg-[#555]" />
            </div>
            <div className="mt-[13px] w-[22px] h-[1px] bg-[#ddd]" />
            <div className="mt-[3px] w-[32px] h-[32px] rounded-[5px] border border-[#c4c4c4] flex items-center justify-center">
              <svg viewBox="0 0 20 20" className="w-5 h-5"><path d="M.5.5h19v19H.5z" fill="#fff" stroke="#666" /><path d="M0 0h20v4H0z" fill="#666" /><path d="M3 9h14M3 14h14" stroke="#777" /><path d="M11 7h2v4h-2zM6 12h2v4H6z" fill="#777" /></svg>
            </div>
            <svg viewBox="0 0 22 24" className="mt-[6px] w-[22px] h-6">
              <text x="0" y="18" fontSize="20" fill="#777" fontFamily="Liberation Serif" fontStyle="italic">A</text>
              <text x="5" y="19" fontSize="21" fontWeight="700" fill="#3f7fbd" fontFamily="Liberation Sans">A</text>
              <path d="M5 22h16" stroke="#3f7fbd" strokeWidth="1.200" />
            </svg>
            <svg viewBox="0 0 24 22" className="mt-[11px] w-6 h-[22px]">
              <path d="M1 19V5h7l2 2h7v4H1z" fill="#f3d49f" /><path d="M1 18l1-8h20l-3 8z" fill="#ecc07c" />
              <path d="M10.500 10.500h12v11h-12z" fill="#fff" stroke="#888" /><circle cx="14" cy="14" r="1.500" fill="#ecc07c" /><path d="M11 21v-2l4-3 3 2 2-1 2 2v2z" fill="#3f7fbd" />
            </svg>
            <svg viewBox="0 0 22 22" className="mt-[15px] w-[21px] h-[21px]">
              <circle cx="11" cy="11" r="10" fill="#fff" stroke="#777" />
              <path d="M16 6l-8 3-2 7 8-3z" fill="#3f7fbd" /><circle cx="11" cy="11" r="1.800" fill="#fff" />
            </svg>
            <span className="mt-[12px] font-['Liberation_Serif',serif] italic font-bold text-[25px] leading-none text-[#4d86c0]">fx</span>
          </div>
        </div>
      </div>
      {/* Status */}
      <div className="h-[23px] shrink-0 flex items-center text-[13px] text-[#444] leading-none">
        <div className="w-[162px] h-[19px] border-r border-[#d4d4d4] shrink-0" />
        <div className="w-[296px] h-[19px] border-r border-[#d4d4d4] shrink-0" />
        <div className="w-[130px] h-[19px] border-r border-[#d4d4d4] flex items-center pl-[9px] pt-[2px] shrink-0">Default</div>
        <div className="w-[171px] h-[19px] border-r border-[#d4d4d4] flex items-center pl-[46px] pt-[2px] shrink-0">English (USA)</div>
        <div className="w-[69px] h-[19px] border-r border-[#d4d4d4] shrink-0" />
        <div className="w-[28px] h-[19px] border-r border-[#d4d4d4] flex items-center justify-center shrink-0"><SI d="M1.500 5.500h9v6h-9zM13 3v10M11.500 3h3M11.500 13h3" /></div>
        <div className="w-[29px] h-[19px] border-r border-[#d4d4d4] flex items-center justify-center shrink-0"><SI c="#e28a9a" d="M3.500 2.500h9v11h-9zM6 2.500v4h4v-4M6 13.500v-3.500h4v3.500" /></div>
        <div className="w-[30px] h-[19px] border-r border-[#d4d4d4] shrink-0" />
        <div className="w-[165px] h-[19px] flex items-center pl-[8px] gap-[6px] pt-[2px] shrink-0"><SI c="#555" d="M4.500 4.500h10v9h-10zM2.500 0v5M0 2.500h5" /><span>6.96 / 5.30</span></div>
        <div className="w-[169px] h-[19px] border-r border-[#d4d4d4] flex items-center pl-[8px] gap-[5px] pt-[2px] shrink-0"><SI c="#3f7fbd" d="M6.500 5.500h8v7h-8zM6.500 2.500h8M1.500 2v11M0 2.500h3M0 12.500h3" /><span>6.30 x 3.54</span></div>
        <div className="w-[142px] h-[19px] border-r border-[#d4d4d4] flex items-center pl-[9px] shrink-0">
          <div className="w-[10px] h-[2px] bg-[#555]" />
          <div className="ml-[5px] w-[96px] h-[1px] bg-[#444] relative"><div className="absolute left-[46px] top-[-5px] w-[3px] h-[11px] bg-[#555]" /></div>
          <div className="ml-[5px] w-[10px] h-[10px] relative"><div className="absolute top-[4px] w-[10px] h-[2px] bg-[#555]" /><div className="absolute left-[4px] w-[2px] h-[10px] bg-[#555]" /></div>
        </div>
        <div className="flex-1 pl-[8px] pt-[2px]">100%</div>
      </div>
    </div>
  );
}
